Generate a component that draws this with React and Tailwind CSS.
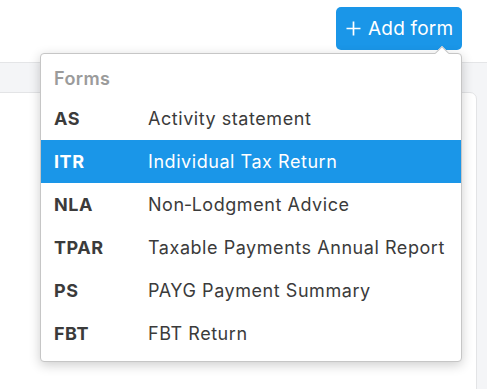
import React from "react";

const rows = [
  ["AS", "Activity statement"],
  ["ITR", "Individual Tax Return", true],
  ["NLA", "Non\u2011Lodgment Advice"],
  ["TPAR", "Taxable Payments Annual Report"],
  ["PS", "PAYG Payment Summary"],
  ["FBT", "FBT Return"],
];

export default function App() {
  return (
    <div
      className="relative w-[487px] h-[389px] overflow-hidden bg-[#f4f5f7]"
      style={{ fontFamily: "Inter, 'Noto Sans', sans-serif" }}
    >
      <div className="h-[63px] bg-white border-b border-[#e4e5e7] flex justify-end items-start pr-[25px] pt-[7px]">
        <button className="w-[126px] h-[43px] rounded-[5px] bg-[#1a96e8] text-white text-[19px] tracking-[0.2px] flex items-center pl-[10px] gap-[7px] leading-none">
          <svg width="15" height="15" viewBox="0 0 15 15" fill="none" stroke="white" strokeWidth="1.7">
            <path d="M7.5 0.5v14M0.5 7.5h14" />
          </svg>
          <span>Add form</span>
        </button>
      </div>
      <div className="mt-[29px] w-[478px] h-[400px] bg-white border border-[#e3e4e6] rounded-tr-[7px] ml-[-1px]" />

      <div className="absolute left-[40px] top-[53px] w-[422px] h-[309px] bg-white border border-[#c6c6c6] rounded-[4px] shadow-[0_3px_12px_rgba(0,0,0,0.2)]">
        <div className="absolute -top-[6px] left-[396px] w-[10px] h-[10px] rotate-45 bg-white border-l border-t border-[#c6c6c6]" />
        <div className="relative h-[43px] pl-[13px] pt-[13px] text-[18px] leading-[24px] tracking-[0.4px] font-semibold text-[#9b9b9b]">
          Forms
        </div>
        {rows.map(([code, label, active]) => (
          <div
            key={code}
            className={
              active
                ? "relative h-[43px] flex items-center bg-[#1a96e8] text-white text-[18px] tracking-[0.55px]"
                : "relative h-[43px] flex items-center text-[#3b3b3b] text-[18px] tracking-[0.55px]"
            }
          >
            <span className="w-[107px] pl-[13px] font-bold">{code}</span>
            <span>{label}</span>
          </div>
        ))}
      </div>
    </div>
  );
}
